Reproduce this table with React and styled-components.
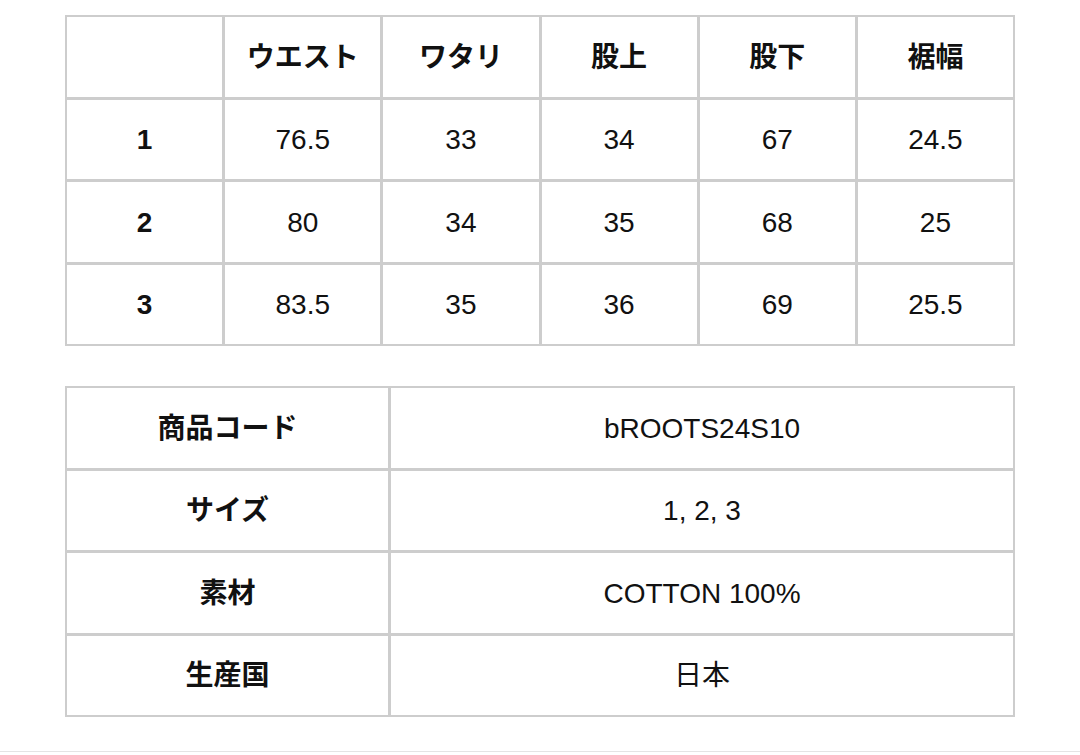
import React from "react";
import styled, { createGlobalStyle } from "styled-components";

const GlobalStyle = createGlobalStyle`
  html, body {
    margin: 0;
    padding: 0;
    background: #ffffff;
  }

  body {
    font-family: "Liberation Sans", "Noto Sans CJK JP", sans-serif;
    color: #111111;
  }
`;

const Page = styled.div`
  width: 1080px;
  height: 755px;
  box-sizing: border-box;
  padding-top: 15px;
  display: flex;
  flex-direction: column;
  align-items: center;
`;

const Grid = styled.div`
  width: 950px;
  box-sizing: border-box;
  display: grid;
  grid-template-columns: ${(props) => props.$columns};
  grid-auto-rows: ${(props) => props.$rowHeight}px;
  gap: 3px;
  padding: 2px;
  background-color: #cdcdcd;
  margin-bottom: ${(props) => props.$spaceBelow || 0}px;
`;

const Cell = styled.div`
  background-color: #ffffff;
  display: flex;
  align-items: center;
  justify-content: center;
  padding-top: 2px;
  font-size: 28px;
  font-weight: ${(props) => (props.$bold ? 700 : 400)};
  line-height: 1;
  white-space: nowrap;
`;

const Divider = styled.div`
  margin-top: auto;
  width: 100%;
  height: 1px;
  margin-bottom: 3px;
  background-color: #e4e4e4;
`;

const headers = ["ウエスト", "ワタリ", "股上", "股下", "裾幅"];

const sizes = [
  { size: "1", values: ["76.5", "33", "34", "67", "24.5"] },
  { size: "2", values: ["80", "34", "35", "68", "25"] },
  { size: "3", values: ["83.5", "35", "36", "69", "25.5"] },
];

const details = [
  { label: "商品コード", value: "bROOTS24S10" },
  { label: "サイズ", value: "1, 2, 3" },
  { label: "素材", value: "COTTON 100%" },
  { label: "生産国", value: "日本" },
];

const App = () => {
  return (
    <Page>
      <GlobalStyle />
      <Grid $columns="repeat(6, 1fr)" $rowHeight={79.5} $spaceBelow={40}>
        <Cell />
        {headers.map((h) => (
          <Cell key={h} $bold>
            {h}
          </Cell>
        ))}
        {sizes.map((row) => (
          <React.Fragment key={row.size}>
            <Cell $bold>{row.size}</Cell>
            {row.values.map((v, i) => (
              <Cell key={i}>{v}</Cell>
            ))}
          </React.Fragment>
        ))}
      </Grid>

      <Grid $columns="321px 1fr" $rowHeight={79.5}>
        {details.map((d) => (
          <React.Fragment key={d.label}>
            <Cell $bold>{d.label}</Cell>
            <Cell>{d.value}</Cell>
          </React.Fragment>
        ))}
      </Grid>
      <Divider />
    </Page>
  );
};

export default App;
